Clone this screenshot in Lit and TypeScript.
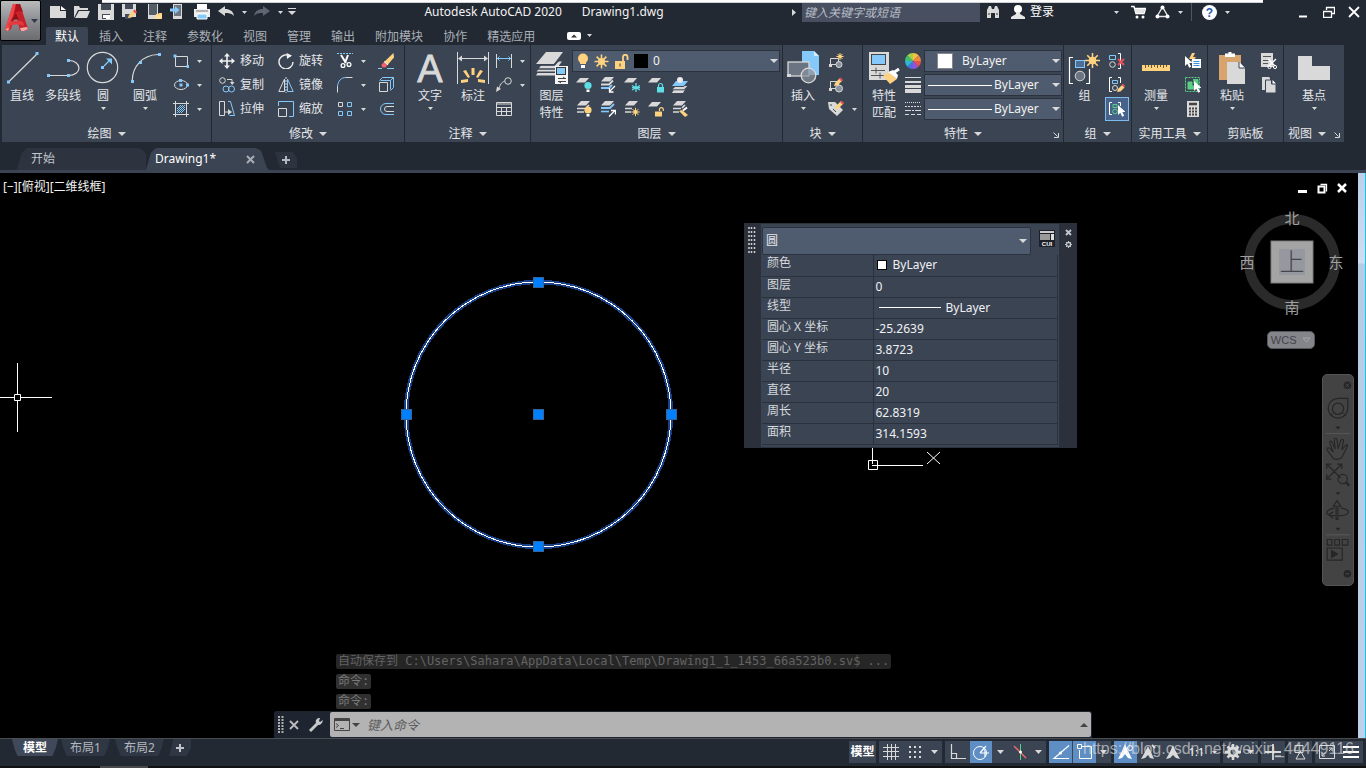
import { LitElement, html, css, svg, nothing, TemplateResult, SVGTemplateResult } from "lit";
import { customElement, state } from "lit/decorators.js";
import { classMap } from "lit/directives/class-map.js";

type Art = SVGTemplateResult | SVGTemplateResult[];

const G = "#d9d9d9";
const B = "#85c8fa";
const Y = "#ffd27f";
const T = "#5edfe6";
const P = "#3b4453";

const ic = (w: number, h: number, art: Art) =>
  html`<svg width=${w} height=${h} viewBox="0 0 ${w} ${h}" fill="none" aria-hidden="true">${art}</svg>`;
const s16 = (art: Art) => ic(16, 16, art);
const s34 = (art: Art) => ic(34, 34, art);
const dot = (x: number, y: number) => svg`<rect x=${x - 1.5} y=${y - 1.5} width="3" height="3" fill=${B}/>`;
const tri = () => ic(5, 3, svg`<path d="M0 0h5L2.5 3z" fill=${G}/>`);
const bigTri = () => ic(8, 4, svg`<path d="M0 0h8L4 4z" fill=${G}/>`);
const midTri = () => ic(7, 4, svg`<path d="M0 0h7L3.500 4z" fill=${G}/>`);
const sheet = (x: number, y: number, c = G) => svg`<path d=${`M${x + 4} ${y}h9l-4 4.500h-9z`} fill=${c}/>`;
const bulb = (x: number, y: number, c: string) => svg`
  <circle cx=${x} cy=${y} r="3.600" fill=${c}/><rect x=${x - 1.5} y=${y + 4} width="3" height="2.500" fill="#fff"/>`;
const pencil = (x: number, y: number) => svg`
  <path d=${`M${x} ${y + 8}l1-3 5-5 2.500 2.500-5 5z`} fill=${Y}/>
  <path d=${`M${x + 5} ${y + 1}l1.500-1.500 2.500 2.500-1.500 1.500z`} fill="#e8505b"/>`;
const star = (x: number, y: number, r: number) => svg`
  <path d=${`M${x} ${y - r}V${y + r}M${x - r} ${y}H${x + r}M${x - r * 0.7} ${y - r * 0.7}l${r * 1.4} ${r * 1.4}M${x + r * 0.7} ${y - r * 0.7}l${-r * 1.4} ${r * 1.4}`} stroke=${Y} stroke-width=${r > 5 ? 1.6 : 1}/>
  <circle cx=${x} cy=${y} r=${r * 0.5} fill=${Y}/>`;
const cursor = (x: number, y: number) => svg`
  <path d=${`M${x} ${y}v10l2.300-2.200 1.900 4 2-1-1.900-3.800h3.200z`} fill="#fff"/>`;

const draw = {
  line: s34(svg`<path d="M3.500 31L32.500 2.500" stroke=${G} stroke-width="1.200"/>${dot(3.5, 31)}${dot(32, 2.5)}`),
  pline: s34(svg`<path d="M3 24.500H23M23 9.500A10 7.500 0 0 1 23 24.500" stroke=${G} stroke-width="1.200"/>${dot(2.5, 24.5)}${dot(22.5, 24.5)}${dot(22.5, 9.5)}`),
  circle: s34(svg`<circle cx="16.500" cy="16.500" r="15.200" stroke=${G} stroke-width="1.200"/><path d="M18 15l6-6" stroke=${B} stroke-width="1.300"/><path d="M20 7.500h6v6z" fill=${B}/>${dot(16.5, 16.5)}`),
  arc: s34(svg`<path d="M4.300 29C4.500 16 14 4 30 3.500" stroke=${G} stroke-width="1.200"/>${dot(4.5, 30.5)}${dot(12.5, 11.5)}${dot(31.500, 3.5)}`),
  rect: s16(svg`<path d="M2.500 3.500h12v10h-12z" stroke=${G}/>${dot(2, 3)}${dot(15, 13.5)}`),
  ellipse: s16(svg`<ellipse cx="8" cy="8" rx="6.500" ry="4.500" stroke=${G}/>${dot(7.500, 3.5)}${dot(8, 8)}${dot(14.5, 8)}`),
  hatch: s16(svg`<path d="M0 2.500h16M0 13.500h16M2.500 0v16M13.500 0v16" stroke=${G}/><path d="M4 8l4-4M4 12l8-8M8 12l4-4M4 10l6-6M6 12l6-6" stroke=${B}/>`),
};

const modify = {
  move: s16(svg`<path d="M8 2v12M2 8h12" stroke="#f0f0f0" stroke-width="1.600"/><path d="M8 0l3 3.500H5zM8 16l3-3.500H5zM0 8l3.500-3v6zM16 8l-3.500-3v6z" fill="#f0f0f0"/>`),
  copy: s16(svg`<circle cx="3.500" cy="3.500" r="2.800" stroke=${G}/><path d="M8 2.500h5v4" stroke=${G}/><path d="M11 5h4.500L13.200 8z" fill=${G}/><circle cx="7" cy="12" r="3" stroke=${B}/><circle cx="12.500" cy="12" r="3" stroke=${B}/>`),
  stretch: s16(svg`<path d="M.500 .500h5v14h-5zM5 11h7" stroke=${G}/><path d="M9 8l4 3-4 3z" fill=${G}/><path d="M9 .500h2.500l4 14h-5" stroke=${B}/>`),
  rotate: s16(svg`<path d="M12.500 3.500A7 7 0 1 0 15 9" stroke="#f0f0f0" stroke-width="1.400"/><path d="M8.500 0L14 2.500 9 6z" fill="#f0f0f0"/>`),
  mirror: s16(svg`<path d="M6.500 2v12.500H.800z" stroke=${G}/><path d="M9.500 2v12.500h5.700z" stroke=${B}/><path d="M8 0v16" stroke=${G} stroke-dasharray="2 1"/>`),
  scale: s16(svg`<path d="M.500 7.500h8v8h-8z" stroke=${G}/><path d="M.500 5V.500h15v15H11" stroke=${B}/>`),
  trim: s16(svg`<path d="M0 .500h16" stroke=${B} stroke-dasharray="2 1"/><path d="M4 2l5 8M11 2L8 10" stroke="#fff" stroke-width="2"/><circle cx="6" cy="12.500" r="1.900" stroke="#fff" stroke-width="1.300"/><circle cx="12" cy="11.500" r="1.900" stroke="#fff" stroke-width="1.300"/>`),
  fillet: s16(svg`<path d="M.500 15.500V9" stroke=${G}/><path d="M.500 9.500C1 4 4 .500 9 .500" stroke=${B}/><path d="M9 .500h6.500" stroke=${G}/>`),
  array: s16(svg`<path d="M1.500 1.500h4v4h-4z" stroke=${G}/><path d="M10.500 1.500h4v4h-4zM1.500 10.500h4v4h-4zM10.500 10.500h4v4h-4z" stroke=${B}/>`),
  erase: s16(svg`<path d="M0 15.500h4M9 15.500h7" stroke=${B}/><path d="M15.500 0L6 9l3.500 3L16 4.500z" fill=${Y}/><path d="M6 9l3.500 3-2 2.500H4.500L3.300 12z" fill="#f4626c"/><path d="M6 8.500l4 3.500" stroke="#fff"/>`),
  explode: s16(svg`<path d="M1.500 5.500h8v9h-8z" stroke=${G}/><path d="M1.500 3.500l3-3h11v10l-3 3M12.500 12.500v-9h-10M12.500 3.500l3-3" stroke=${B}/>`),
  offset: s16(svg`<path d="M16 2.500H8a5.500 5.500 0 0 0 0 11h8" stroke=${B}/><path d="M16 5.500H9a2.500 2.500 0 0 0 0 5h7" stroke=${G}/>`),
};

const annot = {
  text: s34(svg`<text x="17" y="31" text-anchor="middle" font-family="Liberation Sans" font-size="38" fill=${G} stroke=${G} stroke-width=".8">A</text>`),
  dim: s34(svg`<path d="M1.500 1v32M32.500 1v32M3 7.500h28" stroke=${G}/><path d="M2 7.500l4-3v6zM32 7.500l-4-3v6z" fill=${G}/><path d="M15.500 17h3v7h-3zM7 20l3-1 4 7-2 1zM27 20l-3-1-4 7 2 1zM5 29l7-1v3l-7 1zM29 29l-7-1v3l7 1z" fill=${Y}/>`),
  linear: s16(svg`<path d="M.500 1v14M15.500 1v14" stroke=${G}/><path d="M1 5.500h14M3.500 3.500l-2 2 2 2M12.500 3.500l2 2-2 2" stroke=${B}/>`),
  leader: s16(svg`<circle cx="12" cy="4" r="3.300" stroke=${G}/><path d="M8.500 4.500C6 5 5 6 3 11" stroke=${G}/><path d="M0 15l1-5.500L5 12z" fill=${G}/>`),
  table: s16(svg`<path d="M.500 1.500h15v13H.500z" stroke=${G}/><path d="M1 3h14M1 6.500h14M1 10.500h14M5.500 6v8M10.500 6v8" stroke=${G}/>`),
};

const layer = {
  props: s34(svg`
    <path d="M11 1h17L19 13H1zM6 14.500h14l3-4h4l-3 4v3l-5 4H1zM5 19" fill=${G}/>
    <path d="M5 17.500h15v7H1z" fill=${G}/><path d="M1 14h18l5-5M2 18h18M1 21.300h19" stroke=${P} stroke-width="1.600"/>
    <rect x="20" y="15" width="13" height="18" fill="#f5f5f5"/><rect x="21.500" y="16.500" width="9" height="7" fill=${B} stroke="#333"/><path d="M23 27.500h8M30 27.500l-2-1.500M31 30.500h-8M24 30.500l2 1.500" stroke="#444"/>`),
  off: s16([sheet(0, 1), bulb(12, 8.5, T)]),
  iso: s16([sheet(1, 0), svg`<path d="M1 7.500h8l4-4" stroke=${G} stroke-width="1.800"/><path d="M1 11h8l3-3" stroke=${B} stroke-width="2"/><path d="M15 9l-5 5M9.500 11v4h4" stroke="#fff" stroke-width="1.300"/>`]),
  freeze: s16([sheet(0, 1), svg`<path d="M12 6v9M8 8.500l8 4.500M16 8.500L8 13M8 10.700h8" stroke=${T} stroke-width="1.300"/>`]),
  lock: s16([sheet(0, 1), svg`<rect x="9" y="10" width="7" height="5.500" fill=${T}/><path d="M10.500 10V8.500a2 2 0 0 1 4 0V10" stroke=${T} stroke-width="1.200"/>`]),
  make: s16(svg`<path d="M4 9h12l-4 4H0zM2 12.500h11l-2 3.500H0z" fill=${G}/><path d="M4 4h12l-4 5H0z" fill=${B}/><path d="M0 9.500h12l4-4M0 12.800h12l4-4" stroke=${P}/><circle cx="8" cy="3" r="3" fill="#ececec"/>`),
  on: s16([sheet(1, 0), svg`<path d="M1 7.500h8M1 11h7M13 4l-3 3" stroke=${G} stroke-width="1.700"/>`, bulb(12, 9, Y)]),
  uniso: s16([sheet(1, 0), svg`<path d="M1 7h9l4-4" stroke=${B} stroke-width="1.800"/><path d="M1 10.500h8" stroke=${B} stroke-width="1.600"/><path d="M9 15.500l6-6M11 9.500h4.500v4" stroke="#fff" stroke-width="1.400"/>`]),
  thaw: s16([sheet(1, 0), svg`<path d="M1 7.500h7M1 11h6" stroke=${G} stroke-width="1.700"/>`, star(11.5, 11, 4.2)]),
  unlock: s16([sheet(0, 1), svg`<rect x="7" y="10.500" width="7" height="5" fill=${Y}/><path d="M11.500 10V8.500a1.900 1.900 0 0 1 3.800 0V10" stroke=${Y} stroke-width="1.200"/>`]),
  match: s16([sheet(1, 0), svg`<path d="M1 7.500h8M1 11h6M13 4l-3 3" stroke=${G} stroke-width="1.700"/><path d="M7 10l3-1 6 5-3 2z" fill=${Y}/><path d="M11 9.500l4-3" stroke="#fff" stroke-width="2"/>`]),
};

const block = {
  insert: s34(svg`<path d="M16 0h12l5 5v19H16z" fill=${B}/><path d="M28 0v5h5z" fill="#d3ecff"/><rect x="2" y="11" width="21" height="14" fill="#6b7482" stroke=${G} stroke-width="1.300"/><circle cx="22.500" cy="24.500" r="7.300" fill="#8a919c" fill-opacity=".7" stroke=${G} stroke-width="1.300"/><rect x="1" y="23" width="4" height="3" fill=${G}/>`),
  create: s16([svg`<path d="M2.500 5.500h8v6h-8z" stroke=${G}/><path d="M1 11h3v3H1z" fill=${G}/><circle cx="11" cy="11.500" r="3" stroke=${G} fill="#8a919c"/>`, star(12, 3.5, 3.6)]),
  edit: s16([svg`<path d="M2.500 4.500h8v7h-8z" stroke=${G}/><path d="M1 11h3v3H1z" fill=${G}/><circle cx="11" cy="11.500" r="3.500" stroke=${G} fill="#8a919c"/>`, pencil(6, 1)]),
  attr: s16([svg`<path d="M0 1h7l8 8-6 6-8-7z" fill=${G}/><path d="M2 4h2M5 8l3 3" stroke="#444"/>`, pencil(7, 0)]),
};

const wheel = ["#f7c244", "#f08a3c", "#e5544f", "#9b51d6", "#4c6fe0", "#2fb5d8", "#3ec06c", "#a6d24a"];
const prop = {
  match: s34(svg`<rect x="2" y="1" width="20" height="28" fill=${G}/><rect x="4.500" y="3.500" width="14" height="10" fill=${B} stroke="#444"/><path d="M4 19.500h14M4 24.500h14M9 16.500v6M13 21.500v6" stroke="#555"/><path d="M16 25l6-4 8 7-7 5z" fill=${Y}/><path d="M21 21l5-2 5 5-1 4z" fill="#fff"/><path d="M26 22l6-4" stroke="#fff" stroke-width="3"/>`),
  color: s16(wheel.map((_, i) => {
    const a = (i * Math.PI) / 4 - Math.PI / 2;
    const b = a + Math.PI / 4;
    return svg`<path d=${`M8 8L${8 + 8 * Math.cos(a)} ${8 + 8 * Math.sin(a)}A8 8 0 0 1 ${8 + 8 * Math.cos(b)} ${8 + 8 * Math.sin(b)}z`} fill=${wheel[i]}/>`;
  })),
  weight: s16(svg`<path d="M0 .500h16" stroke=${G}/><path d="M0 5h16" stroke=${G} stroke-width="2"/><path d="M0 9.500h16" stroke=${G} stroke-width="3"/><path d="M0 14h16" stroke=${G} stroke-width="4"/>`),
  type: s16(svg`<path d="M0 1.500h16" stroke=${G} stroke-dasharray="1 1"/><path d="M0 5.500h16" stroke=${G} stroke-dasharray="2 1"/><path d="M0 9.500h16" stroke=${G} stroke-dasharray="6 1 2 1"/><path d="M0 13.500h16" stroke=${G} stroke-dasharray="4 2"/>`),
};

const grp = {
  group: s34([svg`<path d="M5 6.500H1.500v26H5M18 32.500h3.500V18" stroke="#fff" stroke-width="1.200"/><rect x="7.500" y="9.500" width="9" height="7" fill="#4b6f96" stroke=${B}/><circle cx="12" cy="25" r="4.800" fill="#6b7482" stroke=${G}/>`, star(24.5, 9.5, 7.5)]),
  ungroup: s16(svg`<path d="M.500 2.500h6v4h-6z" stroke=${B}/><circle cx="3.500" cy="11.500" r="2.800" stroke=${G}/><path d="M9 .500h2.500v15H9" stroke="#fff"/><path d="M9 6l6 6M15 6l-6 6" stroke="#e8505b" stroke-width="1.800"/>`),
  edit: s16([svg`<path d="M3 .500H.500v14H3M9 .500h2.500V6" stroke="#fff"/><path d="M3.500 3.500h5v3h-5z" stroke=${B}/><circle cx="6" cy="11" r="2.500" stroke=${G}/>`, svg`<path d="M8 15l1-3 4-4 2.500 2.500-4 4z" fill=${Y}/><path d="M12.500 8l1.500-1.500 2.300 2.500-1.300 1.300z" fill="#e8505b"/>`]),
  select: s16([svg`<path d="M3 1.500H.500v12H3M9 1.500h2.500V5" stroke="#fff"/><path d="M4 3.500h4v3H4z" stroke="#5ccf86"/><circle cx="6" cy="10.500" r="2.300" stroke="#5ccf86"/>`, cursor(9, 4)]),
};

const util = {
  measure: s34(svg`<path d="M3 14h28v6H3z" fill=${Y}/><path d="M6.500 14v3M9.500 14v2M12.500 14v3M15.500 14v2M18.500 14v3M21.500 14v2M24.500 14v3M27.500 14v2" stroke="#6a5a35"/>`),
  quick: s16([svg`<path d="M7 0L4 6h3l-1 4 5-6H8l2-4z" fill=${Y}/><rect x="7" y="6" width="9" height="9" fill="#fff"/><path d="M8.500 8.500h6M8.500 10.500h6M8.500 12.500h6" stroke="#3d8fe0"/>`, cursor(0, 3)]),
  all: s16([svg`<path d="M.500 .500h14v14H.500z" stroke="#5ccf86" stroke-dasharray="2 1"/><path d="M3 5h4v4h3v3H3zM8 2.500h5V8H9" fill="#5ccf86" stroke="#5ccf86"/>`, cursor(9, 4)]),
  calc: s16(svg`<rect x="2" width="12" height="16" fill=${G}/><path d="M4 3h8" stroke="#444" stroke-width="2.500"/><path d="M4 7.500h8M4 10.500h8M4 13.500h8" stroke="#444" stroke-width="2" stroke-dasharray="2 1"/>`),
};

const clip = {
  paste: s34(svg`<path d="M4 4h22v25H4z" fill="#d6a46c"/><path d="M10 2.500h3.500V1h3v1.500H20V6H10z" fill="#fff"/><path d="M12 11h12l6 6v16H12z" fill=${G}/><path d="M24 11v6h6z" fill="#fff"/><path d="M24 11v6h6" stroke=${P}/>`),
  cut: s16(svg`<rect width="12" height="14" fill=${G}/><path d="M2 3.500h8M2 7.500h6M2 10.500h5" stroke="#555"/><path d="M7 6l7 7M15 6l-7 7" stroke="#fff" stroke-width="1.400"/><circle cx="8.500" cy="14" r="1.600" stroke="#fff"/><circle cx="14" cy="14" r="1.600" stroke="#fff"/>`),
  copy: s16(svg`<path d="M1 0h7l1 1v2H4v10H1z" fill=${G}/><path d="M5 3h5.500v4H15v9H4.500V3z" fill=${G} stroke=${P}/><path d="M11.500 3l3.500 3.500h-3.500z" fill="#fff"/>`),
};

const base = s34(svg`<path d="M1 5h14v10h18v14H1z" fill=${G}/>`);

const qat = {
  new: s16(svg`<path d="M0 2h10v5h6v7H0z" fill=${G}/><path d="M11 2l5 4h-5z" fill="#fff"/>`),
  open: s16(svg`<path d="M0 14V2h5l1 2h8v2H4z" fill=${G}/><path d="M5 7h11l-3 7H1z" fill=${G}/>`),
  save: s16(svg`<path d="M0 0h16v16H0z" fill=${G}/><path d="M3 0h10v6H3zM4 10h8v5H4z" fill="#434b58"/><path d="M5 11h3v3H5z" fill="#fff"/><path d="M8 11h4v4H8z" fill="#fff"/>`),
  saveAs: s16([svg`<path d="M0 0h14v13H0z" fill=${G}/><path d="M3 0h8v5H3zM3 10h5v5H3z" fill="#434b58"/>`, pencil(6, 6)]),
  mobileOpen: s16(svg`<path d="M2 0h10v15H2z" fill=${G}/><path d="M3 0h8v11H3z" fill="#555d69"/><path d="M8 15l2-5h2l1-1h3v6z" fill=${Y}/><path d="M8 15l3-4h6l-3 4z" fill="#ffe0a3"/>`),
  mobileSave: s16(svg`<path d="M3 0h9v15H3z" fill=${G}/><path d="M4 1h7v11H4z" fill="#6d7580"/><path d="M0 4.500h5V2l4.500 4L5 10V7.500H0z" fill=${B}/>`),
  print: s16(svg`<path d="M3 0h10v5H3z" fill="#fff"/><path d="M0 5h16v8H0z" fill="#eee"/><path d="M3 10h10v5H3z" fill=${B} stroke="#fff"/><path d="M2 7h12" stroke="#777"/>`),
  undo: s16(svg`<path d="M0 7l7-5v3c5 0 8 2 9 7-3-3-5-3-9-3v3z" fill=${G}/>`),
  redo: s16(svg`<path d="M16 7L9 2v3C4 5 1 7 0 12c3-3 5-3 9-3v3z" fill="#5f6671"/>`),
  more: ic(8, 8, svg`<path d="M0 .500h8" stroke=${G}/><path d="M0 3h8L4 7z" fill=${G}/>`),
};

const logo = ic(24, 34, svg`
  <path d="M8 0h7l8 25-4 2h-4l-4-17-5 15-3 2-3-1z" fill="#d5202a"/>
  <path d="M8 0h3L4 26l-1 1-3-1z" fill="#f0464c"/>
  <path d="M11 0h4l3 8-4-1-3 1-2 5z" fill="#a8141d"/>
  <path d="M13 7l3 0 7 18-4 2h-2z" fill="#c2232c"/>
  <path d="M3 20c4-4 10-4 15-2l1 4c-6-2-12-2-15 1z" fill="#e23a40"/>
  <path d="M5 18l6-9 3 7c-4-1-7 0-9 2z" fill="#8e1219"/>
  <path d="M0 25l4-1-1 3zM15 24l7-1 1 2-4 2h-3z" fill="#f2a9a6"/>`);

const st = {
  grid: ic(16, 16, svg`<path d="M4.500 0v16M8.500 0v16M12.500 0v16M0 3.500h16M0 7.500h16M0 12.500h16" stroke=${G}/>`),
  snap: ic(14, 14, svg`<path d="M1 2h12M1 7h12M1 12h12" stroke=${G} stroke-width="2" stroke-dasharray="2 3"/>`),
  ortho: ic(16, 16, svg`<path d="M1.500 0v14.500H16M1.500 9.500h5v5" stroke=${G} stroke-width="1.200"/>`),
  polar: ic(18, 16, svg`<circle cx="8" cy="9" r="6.500" stroke="#fff"/><path d="M8 9h9M8 9l6-7M13 5v8" stroke="#fff" stroke-width="1.200"/>`),
  iso: ic(14, 16, svg`<path d="M1 2l12 12" stroke="#f06a74" stroke-width="1.300"/><path d="M7.500 0v16" stroke="#5ccf86"/><circle cx="7.500" cy="8" r="1.500" fill="#fff"/>`),
  track: ic(18, 16, svg`<path d="M17 1.500L2 14.500h15" stroke="#fff" stroke-width="1.200"/><circle cx="8.500" cy="9" r="1.600" fill="#fff"/>`),
  osnap: ic(16, 16, svg`<path d="M4 2.500h10.500v12h-12V6" stroke="#fff"/><path d="M.500 .500h4v4h-4z" stroke="#fff" fill="#5e8ec4"/>`),
  anno: ic(18, 18, svg`<path d="M8 1l3 7 4 8-4-1-3-4-3 4-4 1 4-8z" fill="#fff"/><circle cx="13" cy="5" r="2.500" stroke="#fff"/>`),
  annoAuto: ic(18, 18, svg`<path d="M8 3l3 6 3 7-4-1-2-3-3 3-4 1 4-7z" fill=${G}/><path d="M12 2l3 3" stroke=${G} stroke-width="2"/>`),
  annoScale: ic(18, 18, svg`<path d="M9 2l3 7 4 7-4-1-3-3-3 3-4 1 4-7z" fill=${G}/>`),
  gear: ic(16, 16, svg`<circle cx="8" cy="8" r="4" stroke=${G} stroke-width="3"/><path d="M8 0v3M8 13v3M0 8h3M13 8h3M2.500 2.500l2 2M11.500 11.500l2 2M13.500 2.500l-2 2M4.500 11.500l-2 2" stroke=${G} stroke-width="2.500"/>`),
  plus: ic(16, 16, svg`<path d="M8 0v16M0 8h16" stroke=${G} stroke-width="1.800"/><path d="M10 12h6" stroke=${G}/>`),
  units: ic(16, 16, svg`<path d="M3 1.500h8v7H3z" stroke=${G}/><path d="M4 15h9L8.500 7z" stroke=${G}/>`),
  full: ic(16, 14, svg`<path d="M.500 .500h15v13H.500z" stroke=${G}/><path d="M3 11l3.500-3M3 8v3h3M13 3l-3 3M10 3h3v3" stroke=${G}/>`),
  menu: ic(16, 14, svg`<path d="M0 2h16M0 7h16M0 12h16" stroke="#fff" stroke-width="2"/>`),
};

const ribbonTabs = ["默认", "插入", "注释", "参数化", "视图", "管理", "输出", "附加模块", "协作", "精选应用"];
const facts: [string, string][] = [
  ["颜色", "ByLayer"], ["图层", "0"], ["线型", "ByLayer"], ["圆心 X 坐标", "-25.2639"], ["圆心 Y 坐标", "3.8723"],
  ["半径", "10"], ["直径", "20"], ["周长", "62.8319"], ["面积", "314.1593"],
];

@customElement("app-root")
export class AppRoot extends LitElement {
  @state() private tab = "默认";

  static styles = css`
    :host { display: flex; flex-direction: column; height: 100vh; min-height: 600px; background: #222933; color: #e4e6e9;
      font: 12px/16px "Noto Sans", "Noto Sans CJK SC", sans-serif; overflow: hidden; position: relative; }
    * { box-sizing: border-box; }
    button, select, input { font: inherit; color: inherit; background: none; border: 0; padding: 0; margin: 0; }
    select { appearance: none; outline: 0; flex: 1; min-width: 0; }
    svg { display: block; flex: none; }

    .head { display: grid; grid-template-columns: 46px 1fr; grid-template-rows: 27px 18px; flex: none; }
    .app { grid-row: 1 / 3; width: 41px; height: 41px; border: 1px solid #000; border-radius: 2px; display: flex; align-items: center;
      gap: 2px; padding-left: 4px; background: linear-gradient(#b9babc, #8b8d90 50%, #6a6c70); }
    .strip { position: absolute; left: 102px; right: 103px; top: 0; height: 3px; background: #fdfdfd; border-bottom: 1px solid #cfd3d8; }
    .title { display: flex; height: 24px; align-items: center; }
    .qat { display: flex; align-items: center; width: 256px; }
    .qat button { width: 24px; height: 22px; display: grid; place-items: center; flex: none; }
    .qat .narrow { width: 12px; }
    .name { flex: 1; display: flex; justify-content: center; gap: 20px; color: #f2f2f2; white-space: nowrap; }
    .right { display: flex; align-items: center; width: 580px; height: 24px; flex: none; }
    .right button { display: grid; place-items: center; height: 22px; flex: none; }
    .search { width: 178px; height: 20px; background: #474f60; padding: 0 2px; font-style: italic; }
    .search::placeholder { color: #b9bec8; opacity: 1; }
    .right .login { width: 24px; color: #fff; white-space: nowrap; }
    .gap { flex: 1; }
    .rule { width: 1px; height: 18px; background: #4d5665; margin: 0 5px; }

    .tabs { display: flex; }
    .tabs button { padding: 0 10px; height: 18px; line-height: 17px; color: #abb0b8; }
    .tabs .on { background: #3b4453; color: #fff; padding: 0 9px; margin-right: 1px; border-radius: 2px 2px 0 0; }
    .tabs .fold { display: flex; align-items: center; gap: 4px; margin-left: 22px; padding: 0; }

    .ribbon { display: flex; gap: 1px; padding: 0 2px; height: 97px; flex: none; }
    .panel { background: #3b4453; display: flex; flex-direction: column; flex: none; }
    .body { display: flex; padding-top: 4px; height: 80px; }
    .foot { display: flex; align-items: center; justify-content: center; gap: 6px; height: 17px; position: relative; }
    .foot .launch { position: absolute; right: 4px; bottom: 4px; }
    .view .foot { padding-right: 14px; }
    .big { display: flex; flex-direction: column; align-items: center; padding-top: 2px; flex: none; }
    .big span { line-height: 17px; white-space: nowrap; }
    .big svg:first-child { margin-bottom: 2px; }
    .big svg:last-child { margin-top: 3px; }
    .col { display: flex; flex-direction: column; flex: none; }
    .small { display: flex; align-items: center; height: 24px; white-space: nowrap; }
    .small i { display: grid; place-items: center; width: 26px; font-style: normal; }
    .small b { display: grid; place-items: center; width: 10px; }
    .sel { width: 24px; background: #47638a; outline: 1px solid #7cbcf0; outline-offset: -1px; }
    .combo { display: flex; align-items: center; height: 22px; margin: 1px 0; background: #4f5b6e; border: 1px solid #2b323d; padding: 0 1px 0 4px; color: #f2f2f2; }
    .combo svg:last-child { pointer-events: none; }
    .layers { width: 208px; }
    .layers .combo { gap: 5px; margin-bottom: 0; }
    .five { display: grid; grid-template-columns: repeat(5, 24px); grid-auto-rows: 24px; margin-top: 1px; }
    .five button { display: grid; place-items: center; }
    .props { width: 138px; display: flex; flex-direction: column; }
    .sw { width: 16px; height: 16px; background: #fff; border: 1px solid #888; }
    .black { background: #000; border: 0; width: 14px; height: 14px; }
    .long { width: 64px; height: 1px; background: #fff; }
    .combo.tint { padding-left: 12px; }
    .combo.stroke { padding-left: 3px; }
    .tint select { padding-left: 9px; }
    .stroke select { padding-left: 2px; }
    .modify .body { padding-left: 2px; }
    .draw { width: 209px; } .modify { width: 192px; } .annot { width: 125px; } .layer { width: 251px; } .block { width: 79px; }
    .prop { width: 200px; } .group { width: 67px; } .util { width: 75px; } .clip { width: 75px; } .view { width: 60px; }

    .w4 { width: 4px; } .w12 { width: 12px; } .w15 { width: 15px; } .w16 { width: 16px; } .w19 { width: 19px; } .w20 { width: 20px; }
    .w22 { width: 22px; } .w23 { width: 23px; } .w24 { width: 24px; } .w25 { width: 25px; } .w26 { width: 26px; } .w27 { width: 27px; }
    .w36 { width: 36px; } .w38 { width: 38px; } .w40 { width: 40px; } .w41 { width: 41px; } .w42 { width: 42px; }
    .w46 { width: 46px; } .w48 { width: 48px; } .w50 { width: 50px; } .w57 { width: 57px; } .w59 { width: 59px; } .w60 { width: 60px; }
    .mid-icon { justify-content: center; }

    .files { display: flex; height: 28px; padding: 6px 0 0 14px; flex: none; }
    .file { height: 22px; display: flex; align-items: center; background: #2d3440; color: #c2c6cc; }
    .f1 { width: 132px; padding-left: 17px; clip-path: polygon(0 100%, 3px 96%, 8px 20%, 13px 0, 124px 0, 129px 10%, 132px 30%, 132px 100%); }
    .f2 { width: 123px; padding: 0 14px 0 9px; justify-content: space-between; background: #3b4453; color: #fff;
      clip-path: polygon(0 100%, 5px 20%, 10px 0, 110px 0, 115px 12%, 121px 90%, 123px 100%); }
    .f3 { width: 22px; height: 16px; margin: 4px 0 0 6px; justify-content: center; clip-path: polygon(0 0, 18px 0, 22px 40%, 22px 100%, 5px 100%); }
    .edge { height: 3px; background: #3b4453; flex: none; }

    .canvas { flex: 1; min-height: 0; background: #000; position: relative; overflow: hidden; }
    .canvas > * { position: absolute; }
    .scene { left: 0; top: 0; }
    .vp { left: 3px; top: 6px; color: #f2f2f2; }
    .wins { right: 19px; top: 9px; display: flex; gap: 9px; }
    .scroll { right: 0; top: 0; bottom: 0; width: 8px; border-right: 1px solid #16c5ea; background: linear-gradient(#bcd0ec, #d0dcf0 90px, #b6cbe6 91px, #bdd1ec); }
    .cube { right: 22px; top: 29px; }
    .wcs { right: 51px; top: 158px; width: 48px; height: 18px; border-radius: 5px; background: #84858b; border: 1px solid #56575c; color: #43444a;
      display: flex; align-items: center; justify-content: space-around; font: 11px "Liberation Sans", sans-serif; }
    .nav { right: 12px; top: 201px; width: 32px; height: 212px; background: #434343; border: 1px solid #545454; border-radius: 5px; }

    .palette { left: 744px; top: 50px; width: 333px; display: flex; background: #2b303b; }
    .grip { width: 16px; padding: 4px; }
    .mid { width: 300px; background: #3b4453; border: 1px solid #2b323d; padding: 3px 1px 2px; }
    .top { display: flex; height: 28px; align-items: flex-start; }
    .kind { width: 269px; height: 28px; display: flex; align-items: center; background: #4f5b6e; border: 1px solid #2b323d; border-radius: 2px; padding: 0 3px; }
    .cui { margin: 3px 0 0 8px; }
    table { border-collapse: collapse; width: 100%; table-layout: fixed; }
    th, td { height: 21px; padding: 0 0 0 5px; border-bottom: 1px solid #2b323d; line-height: 16px; text-align: left; font-weight: 400; vertical-align: top; color: #d5d8dd; }
    th { width: 111px; border-right: 1px solid #2b323d; }
    td { padding: 2px 0 0 2px; color: #f0f1f3; border-right: 1px solid #2b323d; }
    td div { display: flex; align-items: center; }
    .chip { width: 10px; height: 10px; background: #fff; border: 1px solid #000; margin: 0 6px 0 1px; }
    .dash { width: 62px; height: 1px; background: #fff; margin: 0 5px 0 3px; }
    .side { width: 17px; display: flex; flex-direction: column; align-items: center; padding-top: 6px; gap: 5px; }

    .log { left: 336px; bottom: 29px; display: flex; flex-direction: column; align-items: flex-start; gap: 5px; }
    .log span { height: 15px; line-height: 15px; padding: 0 2px; background: #303030; border-radius: 2px; color: #7a7a7a; white-space: nowrap;
      font-family: "DejaVu Sans Mono", "Noto Sans CJK SC", monospace; }
    .log span:first-child { background: #262626; color: #636363; }
    .cmd { left: 274px; right: 274px; bottom: 0; height: 27px; display: flex; align-items: center; background: #1f2530; border-radius: 3px 3px 0 0; padding: 1px; }
    .tools { width: 55px; display: flex; align-items: center; gap: 5px; padding-left: 3px; flex: none; }
    .tools .wrench { margin-left: 4px; }
    .entry { flex: 1; height: 25px; background: #b3b3b3; border-radius: 2px; display: flex; align-items: center; padding: 0 3px 0 4px; gap: 2px; color: #333; }
    .entry input { flex: 1; font-style: italic; font-size: 13px; padding-left: 5px; outline: 0; height: 24px; }
    .entry input::placeholder { color: #5c5c5c; opacity: 1; }

    .status { display: flex; height: 28px; border-top: 1px solid #4a4d52; flex: none; justify-content: space-between; background: #222933; }
    .lays { display: flex; padding-left: 12px; }
    .lays button { height: 17px; line-height: 16px; background: #2f3744; color: #b4b8bf; margin-right: 5px; width: 49px;
      clip-path: polygon(0 0, 100% 0, 95% 55%, 88% 100%, 12% 100%, 5% 55%); }
    .lays .on { width: 46px; background: #3f4959; color: #fff; font-weight: 700; margin-right: 3px; }
    .lays .add { width: 22px; display: grid; place-items: center; clip-path: polygon(20% 0, 100% 0, 100% 50%, 80% 100%, 0 100%); }
    .sets { display: flex; gap: 3px; padding: 2px 3px 0 0; }
    .set { display: flex; height: 22px; background: #3b4453; }
    .set button { display: grid; place-items: center; height: 22px; }
    .set .lit { background: #5e8ec4; }
    .set .split { margin-left: 1px; }
    .strong { font-weight: 700; color: #fff; }
    .ratio { font-size: 11px; color: #fff; }
    .base { height: 2px; background: #111; flex: none; padding-left: 100px; }
    .base span { display: block; width: 48px; height: 2px; background: #4a4a4a; }
    .mark { position: absolute; right: 12px; bottom: 9px; font: 16px/20px "Liberation Sans", sans-serif; color: rgba(225, 225, 225, 0.65); }
  `;

  private big(w: string, art: TemplateResult, lines: string[], arrow = false) {
    return html`<button class="big ${w}">${art}${lines.map((l) => html`<span>${l}</span>`)}${arrow ? tri() : nothing}</button>`;
  }

  private small(art: TemplateResult, name: string, label = "", arrow = false) {
    return html`<button class="small" aria-label=${name}><i>${art}</i>${label}${arrow ? html`<b>${tri()}</b>` : nothing}</button>`;
  }

  private panel(id: string, title: string, body: TemplateResult, arrow = true, launch = false) {
    return html`<section class="panel ${id}" aria-label=${title}>
      <div class="body">${body}</div>
      <div class="foot">${title}${arrow ? bigTri() : nothing}
        ${launch ? html`<button class="launch" aria-label="${title}设置">${ic(6, 6, svg`<path d="M.500 .500l4 4M5.500 1v4.500H1" stroke=${G}/>`)}</button>` : nothing}
      </div></section>`;
  }

  private ribbon() {
    return html`<div class="ribbon">
      ${this.panel("draw", "绘图", html`
        ${this.big("w40", draw.line, ["直线"])}${this.big("w42", draw.pline, ["多段线"])}
        ${this.big("w38", draw.circle, ["圆"], true)}${this.big("w46", draw.arc, ["圆弧"], true)}
        <div class="col">${this.small(draw.rect, "矩形", "", true)}${this.small(draw.ellipse, "椭圆", "", true)}${this.small(draw.hatch, "图案填充", "", true)}</div>`)}
      ${this.panel("modify", "修改", html`
        <div class="col w59">${this.small(modify.move, "移动", "移动")}${this.small(modify.copy, "复制", "复制")}${this.small(modify.stretch, "拉伸", "拉伸")}</div>
        <div class="col w59">${this.small(modify.rotate, "旋转", "旋转")}${this.small(modify.mirror, "镜像", "镜像")}${this.small(modify.scale, "缩放", "缩放")}</div>
        <div class="col w41">${this.small(modify.trim, "修剪", "", true)}${this.small(modify.fillet, "圆角", "", true)}${this.small(modify.array, "阵列", "", true)}</div>
        <div class="col">${this.small(modify.erase, "删除")}${this.small(modify.explode, "分解")}${this.small(modify.offset, "偏移")}</div>`)}
      ${this.panel("annot", "注释", html`
        ${this.big("w50", annot.text, ["文字"], true)}${this.big("w36", annot.dim, ["标注"])}
        <div class="col">${this.small(annot.linear, "线性", "", true)}${this.small(annot.leader, "引线", "", true)}${this.small(annot.table, "表格")}</div>`)}
      ${this.panel("layer", "图层", html`
        ${this.big("w41", layer.props, ["图层", "特性"])}
        <div class="layers">
          <div class="combo">
            ${ic(12, 16, svg`<circle cx="6" cy="5.500" r="5" fill=${Y}/><path d="M3 8h6v3H3z" fill=${Y}/><path d="M4 12h4v3H4z" fill="#fff"/>`)}
            ${ic(15, 15, star(7.5, 7.5, 7))}
            ${ic(15, 15, svg`<path d="M1 7h10v8H1z" fill=${Y}/><path d="M9 7V3a2 2 0 0 1 4.500 0v3" stroke=${Y} stroke-width="1.800"/><path d="M6 9.500v3" stroke="#444"/>`)}
            <span class="sw black"></span>
            <select aria-label="图层"><option>0</option></select>${bigTri()}
          </div>
          <div class="five">
            ${[layer.off, layer.iso, layer.freeze, layer.lock, layer.make, layer.on, layer.uniso, layer.thaw, layer.unlock, layer.match].map((a, i) => html`<button aria-label="图层工具 ${i + 1}">${a}</button>`)}
          </div>
        </div>`)}
      ${this.panel("block", "块", html`
        ${this.big("w40", block.insert, ["插入"], true)}
        <div class="col">${this.small(block.create, "创建")}${this.small(block.edit, "编辑")}${this.small(block.attr, "编辑属性", "", true)}</div>`)}
      ${this.panel("prop", "特性", html`
        ${this.big("w42", prop.match, ["特性", "匹配"])}
        <div class="col w19">${[prop.color, prop.weight, prop.type].map((a) => html`<span class="small">${a}</span>`)}</div>
        <div class="props">
          <div class="combo tint"><span class="sw"></span><select aria-label="颜色"><option>ByLayer</option></select>${bigTri()}</div>
          <div class="combo stroke"><span class="long"></span><select aria-label="线宽"><option>ByLayer</option></select>${bigTri()}</div>
          <div class="combo stroke"><span class="long"></span><select aria-label="线型"><option>ByLayer</option></select>${bigTri()}</div>
        </div>`, true, true)}
      ${this.panel("group", "组", html`
        ${this.big("w41", grp.group, ["组"])}
        <div class="col"><button class="small w24 mid-icon" aria-label="解除编组">${grp.ungroup}</button><button class="small w24 mid-icon" aria-label="组编辑">${grp.edit}</button><button class="small mid-icon sel" aria-label="组选择">${grp.select}</button></div>`)}
      ${this.panel("util", "实用工具", html`
        ${this.big("w48", util.measure, ["测量"], true)}
        <div class="col">${this.small(util.quick, "快速选择")}${this.small(util.all, "全部选择")}${this.small(util.calc, "快速计算器")}</div>`)}
      ${this.panel("clip", "剪贴板", html`
        ${this.big("w48", clip.paste, ["粘贴"], true)}
        <div class="col">${this.small(clip.cut, "剪切")}${this.small(clip.copy, "复制剪裁")}</div>`, false)}
      ${this.panel("view", "视图", this.big("w60", base, ["基点"], true), true, true)}
    </div>`;
  }

  private scene() {
    const grips = [[538, 109], [406, 241], [538, 241], [671, 241], [538, 373]];
    return html`<svg class="scene" width="1100" height="540" viewBox="0 0 1100 540" fill="none" aria-hidden="true">
      <circle cx="538.500" cy="241.500" r="132.500" stroke="#193f87" stroke-width="4.500" shape-rendering="crispEdges"/>
      <circle cx="538.500" cy="241.500" r="132.500" stroke="#fff" stroke-width="1" shape-rendering="crispEdges"/>
      ${grips.map(([x, y]) => svg`<rect x=${x - 5 + 0.5} y=${y - 5 + 0.5} width="10" height="10" fill="#007fff" stroke="#33659c"/>`)}
      <path d="M0 224.500h14M21 224.500h31M17.500 190v31M17.500 228v31M14.500 221.500h6v6h-6z" stroke="#fff"/>
      <path d="M872.500 270v21M868.500 287.500h9v9h-9zM872 292.500h51M927 279l13 12M940 279l-13 12" stroke="#fff"/>
    </svg>`;
  }

  private palette() {
    return html`<section class="palette" aria-label="快捷特性">
      <div class="grip">${ic(8, 26, svg`<path d="M1 0v26M3.500 0v26M6.500 0v26" stroke="#cfcfcf" stroke-width="1.500" stroke-dasharray="2 2"/>`)}</div>
      <div class="mid">
        <div class="top"><div class="kind"><select aria-label="对象类型"><option>圆</option></select>${bigTri()}</div>
          <button class="cui" aria-label="自定义">${ic(16, 17, svg`<path d="M0 0h16v17H0z" fill="#1e2127"/><path d="M1 1h14v2H1z" fill="#ccc"/><path d="M1 4h10v6H1z" fill="#999"/><path d="M12 4h3v6h-3z" fill="#ddd"/><text x="8" y="16" text-anchor="middle" font-family="Liberation Sans" font-weight="bold" font-size="6" fill="#fff">CUI</text>`)}</button></div>
        <table>${facts.map(([k, v], i) => html`<tr><th scope="row">${k}</th><td><div>${i === 0 ? html`<span class="chip"></span>` : i === 2 ? html`<span class="dash"></span>` : nothing}${v}</div></td></tr>`)}</table>
      </div>
      <div class="side">
        <button aria-label="关闭">${ic(7, 7, svg`<path d="M1 1l5 5M6 1L1 6" stroke="#c4c7cc" stroke-width="1.800"/>`)}</button>
        <button aria-label="选项">${ic(7, 7, svg`<circle cx="3.500" cy="3.500" r="2" stroke="#c4c7cc" stroke-width="1.300"/><path d="M3.500 0v1M3.500 6v1M0 3.500h1M6 3.500h1M1 1l1 1M5 5l1 1M6 1L5 2M2 5L1 6" stroke="#c4c7cc"/>`)}</button>
      </div>
    </section>`;
  }

  private cube() {
    const t = (x: number, y: number, s: string) => svg`<text x=${x} y=${y} text-anchor="middle" font-family="Noto Sans CJK SC" font-size="15" fill="#a0a0a0">${s}</text>`;
    return html`<svg class="cube" width="106" height="118" viewBox="0 -8 106 118" fill="none" role="img" aria-label="ViewCube">
      <circle cx="54" cy="52" r="43" stroke="#2a2a2a" stroke-width="10"/>
      <rect x="33" y="31" width="42" height="42" fill="#a4a4a4" stroke="#7d7d7d"/><rect x="41" y="39" width="26" height="26" fill="#96989f"/>
      <text x="54" y="61" text-anchor="middle" font-family="Noto Sans CJK SC" font-weight="300" font-size="25" fill="#44464c">上</text>
      ${t(54, 14, "北")}${t(54, 103, "南")}${t(9, 58, "西")}${t(98, 58, "东")}
    </svg>`;
  }

  private nav() {
    return html`<svg class="nav" viewBox="0 0 32 212" fill="none" stroke="#262626" role="img" aria-label="导航栏">
      <g fill="#262626" stroke="none"><circle cx="26" cy="5" r="4"/><circle cx="26" cy="206" r="4"/><path d="M13 49h6l-3 3zM13 119h6l-3 3zM13 157h6l-3 3z"/></g>
      <path d="M24 3l4 4M28 3l-4 4M24 206h4" stroke="#4c4c4c"/>
      <path d="M16 19h10.500v10.500A10.500 10.500 0 1 1 16 19z" stroke-width="1.300"/><circle cx="16" cy="30" r="6" stroke-width="1.300"/><path d="M11 34l-3 3M21 34l3 3"/>
      <path d="M3 56.500h26M3 164.500h26" stroke="#5a5a5a"/>
      <path d="M11 83l-6-8c-2-3 0-4 2-3l4 4-4-10c0-2 2-2 3 0l3 7-1-10c0-2 3-2 3 0l1 10 3-9c1-2 3-1 3 0l-2 10 4-5c1-1 3-1 2 1l-5 10c-1 4-8 5-10 3z" stroke-width="1.200"/>
      <path d="M5 90l14 14M19 90L5 104M4 94v-5h5M15 89h5v5M4 100v5h5" stroke-width="1.400"/><circle cx="21" cy="105" r="5" stroke-width="1.300"/><path d="M24 108l4 4" stroke-width="2.400"/>
      <path d="M14 148v-14h-3l4-6 4 6h-3v14zM19 136c11 1 11 8-2 8M12 136C2 138 2 143 9 144l4 0M11 140l-5 3 5 4" stroke-width="1.300"/>
      <path d="M4.500 169.500h5v6h-5zM12.500 169.500h5v6h-5zM20.500 169.500h6v6h-6zM4.500 178.500h16v13h-16z" stroke-width="1.200"/><path d="M9 181l7 4-7 4z" fill="#262626"/>
    </svg>`;
  }

  private status() {
    const b = (c: string, a: TemplateResult, n: string) => html`<button class=${c} aria-label=${n}>${a}</button>`;
    return html`<footer class="status">
      <div class="lays"><button class="on">模型</button><button>布局1</button><button>布局2</button>
        <button class="add" aria-label="新建布局">${ic(8, 8, svg`<path d="M4 0v8M0 4h8" stroke="#c0c4ca" stroke-width="2"/>`)}</button></div>
      <div class="sets">
        <div class="set"><button class="w27 strong">模型</button></div>
        <div class="set">${b("w24", st.grid, "栅格")}${b("w24", st.snap, "捕捉")}${b("w15", midTri(), "捕捉选项")}</div>
        <div class="set">${b("w25", st.ortho, "正交")}${b("w22 lit", st.polar, "极轴")}${b("w16", midTri(), "极轴选项")}${b("w23", st.iso, "等轴测")}${b("w15", midTri(), "等轴测选项")}</div>
        <div class="set">${b("w23 lit", st.track, "对象捕捉追踪")}${b("w23 lit split", st.osnap, "对象捕捉")}${b("w15", midTri(), "捕捉设置")}</div>
        <div class="set">${b("w23 lit", st.anno, "注释可见性")}${b("w24", st.annoAuto, "自动缩放")}${b("w24", st.annoScale, "注释比例")}<button class="w23 ratio">1:1</button>${b("w12", tri(), "比例")}</div>
        <div class="set">${b("w20", st.gear, "切换工作空间")}${b("w15", midTri(), "工作空间")}</div>
        <div class="set">${b("w24", st.plus, "注释监视器")}</div>
        <div class="set">${b("w24", st.units, "隔离对象")}</div>
        <div class="set">${b("w24", st.full, "全屏显示")}${b("w24", st.menu, "自定义")}</div>
      </div>
    </footer>`;
  }

  render() {
    return html`
      <header class="head">
        <button class="app" aria-label="应用程序菜单">${logo}${ic(7, 4, svg`<path d="M0 0h7L3.500 4z" fill="#333a45"/>`)}</button>
        <div class="title">
          <div class="qat">
            ${[qat.new, qat.open, qat.save, qat.saveAs, qat.mobileOpen, qat.mobileSave, qat.print, qat.undo].map((a, i) => html`<button aria-label="快速访问 ${i + 1}">${a}</button>`)}
            <button class="narrow" aria-label="放弃列表">${tri()}</button><button aria-label="重做">${qat.redo}</button>
            <button class="narrow" aria-label="重做列表">${tri()}</button><button class="narrow" aria-label="自定义快速访问">${qat.more}</button>
          </div>
          <div class="name"><span>Autodesk AutoCAD 2020</span><span>Drawing1.dwg</span></div>
          <div class="right">
            <button class="w16" aria-label="展开">${ic(4, 7, svg`<path d="M0 0l4 3.500L0 7z" fill=${G}/>`)}</button>
            <input class="search" aria-label="搜索" placeholder="键入关键字或短语" />
            <button class="w26" aria-label="查找">${ic(14, 14, svg`<path d="M1 5l2-4h2l1 3h2l1-3h2l2 4v8H9V8H5v5H1z" fill=${G}/><path d="M2 9h2M10 9h2" stroke="#333"/>`)}</button>
            <button class="w24" aria-label="用户">${ic(14, 14, svg`<circle cx="7" cy="4" r="4" fill="#fff"/><path d="M5 7h4v2l5 3v2H0v-2l5-3z" fill="#e6e6e6"/>`)}</button>
            <button class="login">登录</button>
            <span class="gap"></span>
            <button class="w12" aria-label="账户">${tri()}</button>
            <span class="w4"></span>
            <button class="w24" aria-label="应用商店">${ic(15, 14, svg`<path d="M0 1.500h3l2 7h8l1.500-5H4" stroke="#fff" stroke-width="1.500"/><path d="M4 4h10l-1.500 4H5z" fill="#e6e6e6"/><circle cx="6" cy="12" r="1.500" fill="#fff"/><circle cx="12" cy="12" r="1.500" fill="#fff"/>`)}</button>
            <button class="w24" aria-label="Autodesk 应用">${ic(15, 14, svg`<path d="M7.500 2L2 11.500h11z" stroke="#e6e6e6" stroke-width="1.400"/><circle cx="7.500" cy="2.500" r="2" fill="#fff"/><circle cx="2.500" cy="11.500" r="2" fill="#fff"/><circle cx="12.500" cy="11.500" r="2" fill="#fff"/>`)}</button>
            <button class="w12" aria-label="更多应用">${tri()}</button>
            <span class="rule"></span>
            <button class="w24" aria-label="帮助">${ic(15, 15, svg`<circle cx="7.500" cy="7.500" r="7.500" fill="#fff"/><text x="7.500" y="12" text-anchor="middle" font-family="Liberation Sans" font-weight="bold" font-size="12" fill="#2458a8">?</text>`)}</button>
            <button class="w12" aria-label="帮助选项">${tri()}</button>
            <span class="w57"></span>
            <button class="w26" aria-label="最小化">${ic(12, 12, svg`<path d="M2 10.500h8" stroke="#fff" stroke-width="2"/>`)}</button>
            <button class="w26" aria-label="还原">${ic(12, 12, svg`<path d="M3.500 4V1.500h8v6H9" stroke="#fff" stroke-width="1.300"/><path d="M.500 5.500h8v6h-8z" stroke="#fff" stroke-width="1.300"/>`)}</button>
            <button class="w24" aria-label="关闭">${ic(12, 12, svg`<path d="M1 1l10 10M11 1L1 11" stroke="#fff" stroke-width="1.800"/>`)}</button>
          </div>
        </div>
        <nav class="tabs">
          ${ribbonTabs.map((t) => html`<button class=${classMap({ on: t === this.tab })} @click=${() => (this.tab = t)}>${t}</button>`)}
          <button class="fold" aria-label="最小化功能区">${ic(14, 8, svg`<rect width="14" height="8" rx="2" fill="#fff"/><path d="M4 5.500h6L7 2.500z" fill="#333"/>`)}${ic(8, 4, svg`<path d="M2 0h5L4.500 3z" fill=${G}/>`)}</button>
        </nav>
      </header>
      <span class="strip"></span>
      ${this.ribbon()}
      <div class="files">
        <button class="file f1">开始</button>
        <div class="file f2"><span>Drawing1*</span><button aria-label="关闭图形">${ic(9, 9, svg`<path d="M1 1l7 7M8 1L1 8" stroke="#a9aeb6" stroke-width="2"/>`)}</button></div>
        <button class="file f3" aria-label="新图形">${ic(8, 8, svg`<path d="M4 0v8M0 4h8" stroke="#b4b8bf" stroke-width="2"/>`)}</button>
      </div>
      <div class="edge"></div>
      <main class="canvas">
        ${this.scene()}
        <span class="vp">[−][俯视][二维线框]</span>
        <div class="wins">
          <button aria-label="最小化视口">${ic(11, 12, svg`<path d="M1 9.500h9" stroke="#fff" stroke-width="3"/>`)}</button>
          <button aria-label="还原视口">${ic(11, 12, svg`<path d="M3.500 2.500h6v7" stroke="#fff" stroke-width="1.300"/><path d="M1.500 4.500h6v6h-6z" stroke="#fff" stroke-width="2"/>`)}</button>
          <button aria-label="关闭视口">${ic(10, 12, svg`<path d="M1 2l8 8M9 2l-8 8" stroke="#fff" stroke-width="2.500"/>`)}</button>
        </div>
        ${this.cube()}
        <button class="wcs">WCS ${ic(9, 6, svg`<path d="M1 1h7L4.500 5z" stroke="#a5a6ac"/>`)}</button>
        ${this.nav()}
        <span class="scroll"></span>
        ${this.palette()}
        <div class="log"><span>自动保存到 C:\\Users\\Sahara\\AppData\\Local\\Temp\\Drawing1_1_1453_66a523b0.sv$ ...</span><span>命令:</span><span>命令:</span></div>
        <div class="cmd">
          <div class="tools">
            ${ic(6, 18, svg`<path d="M1 0v18M4.500 0v18" stroke="#b0b0b0" stroke-width="2" stroke-dasharray="2 1"/>`)}
            <button aria-label="关闭命令行">${ic(10, 10, svg`<path d="M1 1l8 8M9 1L1 9" stroke="#bdbdbd" stroke-width="1.800"/>`)}</button>
            <button class="wrench" aria-label="自定义命令行">${ic(16, 16, svg`<path d="M2 14l8-8" stroke="#c9c9c9" stroke-width="3"/><path d="M15 3l-3 2-1-1 1-3c-3 0-5 2-4 5 1 3 6 3 7-3z" fill="#c9c9c9"/>`)}</button>
          </div>
          <div class="entry">
            ${ic(16, 13, svg`<path d="M.500 .500h15v12H.500z" stroke="#444"/><path d="M0 2h16" stroke="#444" stroke-width="2"/><path d="M2 5.500l2.500 2-2.500 2M6 10.500h4" stroke="#444"/>`)}
            ${ic(8, 4, svg`<path d="M0 0h8L4 4z" fill="#444"/>`)}
            <input aria-label="命令" placeholder="键入命令" />
            ${ic(8, 4, svg`<path d="M0 4h8L4 0z" fill="#444"/>`)}
          </div>
        </div>
      </main>
      ${this.status()}
      <div class="base"><span></span></div>
      <span class="mark">https://blog.csdn.net/weixin_44449116</span>`;
  }
}
